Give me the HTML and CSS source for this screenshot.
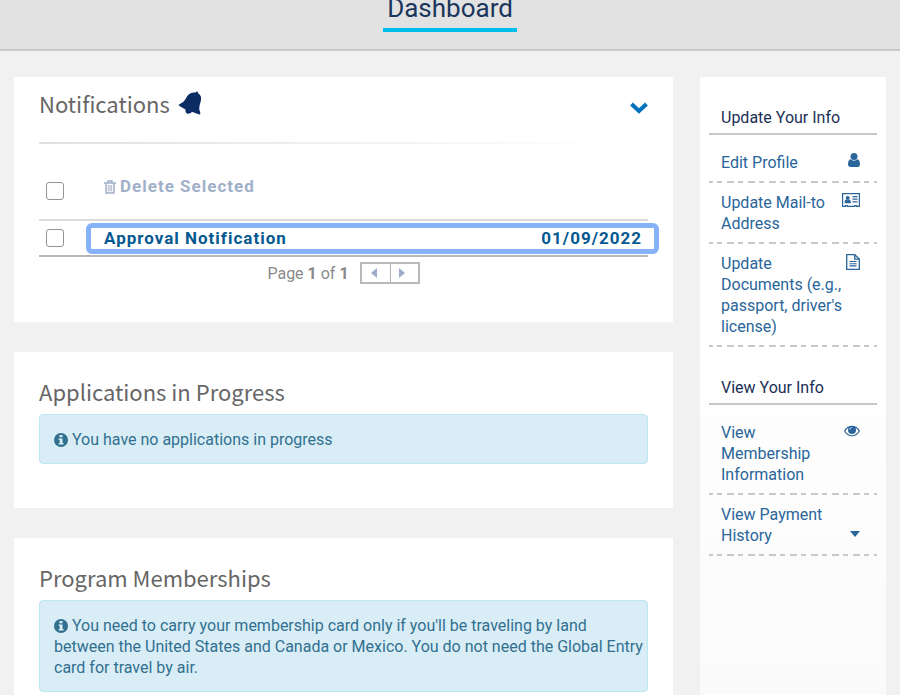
FILE: index.html
```html
<!DOCTYPE html>
<html lang="en">
<head>
    <meta charset="utf-8">
    <title>Dashboard</title>
    <meta name="viewport" content="width=device-width, initial-scale=1.0">
    <link rel="stylesheet" href="styles.css">
</head>
<body>

<header class="page-header">
    <h1>Dashboard</h1>
</header>

<div class="layout">
    <main class="content">
        <section class="card notifications">
            <div class="card-head">
                <h2>Notifications</h2>
                <svg class="icon-bell" width="24" height="24" viewBox="0 0 24 24" aria-hidden="true">
                    <path d="M1 13.500C4 12 6 10.500 7.500 8C9.500 4 12 1.800 15.500 1.600L17.500 1.500L18.500 0.500L20 1L20 2.200C22.500 3.500 23.500 6 23 9C22.500 12 21 15 21.300 18.500L22.400 22L22 23.400L20.500 23.300L14.500 21C13 21.200 12 23 10 22.700C8 22.500 7.200 21 7.500 18.500L1.500 15C0.700 14.500 0.500 13.900 1 13.500Z"/>
                </svg>
                <button type="button" class="toggle" aria-label="Collapse notifications">
                    <svg width="18" height="12" viewBox="0 0 18 12"><path d="M1.500 2L9 9L16.500 2" fill="none" stroke="currentColor" stroke-width="4"/></svg>
                </button>
            </div>
            <hr class="fade">
            <table class="notice-table">
                <tr class="select-row">
                    <td class="check"><input type="checkbox" aria-label="Select all notifications"></td>
                    <td>
                        <button type="button" class="delete-button">
                            <svg width="12" height="14" viewBox="0 0 12 14" stroke="currentColor" aria-hidden="true">
                                <path d="M0 3H12M4 3V1H8V3" fill="none" stroke-width="1.500"/>
                                <path d="M2 3V13H10V3" fill="none" stroke-width="1.500"/>
                                <path d="M4.300 5V11.500M6 5V11.500M7.700 5V11.500" fill="none" stroke-width="0.900"/>
                            </svg>
                            Delete Selected
                        </button>
                    </td>
                </tr>
                <tr class="notice-row">
                    <td class="check"><input type="checkbox" aria-label="Select Approval Notification"></td>
                    <td>
                        <a href="#" class="notice-link"><span>Approval Notification</span><span>01/09/2022</span></a>
                    </td>
                </tr>
            </table>
            <div class="pager">
                <span>Page <b>1</b> of <b>1</b></span>
                <div class="pager-buttons">
                    <button type="button" aria-label="Previous page"><svg width="6" height="10" viewBox="0 0 6 10"><path d="M6 0V10L0 5Z"/></svg></button>
                    <button type="button" aria-label="Next page"><svg width="6" height="10" viewBox="0 0 6 10"><path d="M0 0V10L6 5Z"/></svg></button>
                </div>
            </div>
        </section>

        <section class="card applications">
            <h2>Applications in Progress</h2>
            <p class="alert"><svg class="icon-info" width="14" height="14" viewBox="0 0 14 14" aria-hidden="true"><circle cx="7" cy="7" r="7"/><path d="M5.500 2H8.500V4.300H5.500ZM4.700 5.500H8.500V10H9.500V11.600H4.700V10H5.700V7.100H4.700Z"/></svg> You have no applications in progress</p>
        </section>

        <section class="card">
            <h2>Program Memberships</h2>
            <p class="alert"><svg class="icon-info" width="14" height="14" viewBox="0 0 14 14" aria-hidden="true"><circle cx="7" cy="7" r="7"/><path d="M5.500 2H8.500V4.300H5.500ZM4.700 5.500H8.500V10H9.500V11.600H4.700V10H5.700V7.100H4.700Z"/></svg> You need to carry your membership card only if you'll be traveling by land between the United States and Canada or Mexico. You do not need the Global Entry card for travel by air.</p>
        </section>
    </main>

    <aside class="sidebar">
        <h3>Update Your Info</h3>
        <ul>
            <li><a href="#">
                <span>Edit Profile</span>
                <svg width="12" height="14" viewBox="0 0 12 14" aria-hidden="true"><circle cx="6" cy="3.500" r="3.500"/><path d="M2.600 6.200C0.800 6.600 0 8.500 0 11.200C0 12.800 1 14 2.400 14H9.600C11 14 12 12.800 12 11.200C12 8.500 11.200 6.600 9.400 6.200C7.500 8.100 4.500 8.100 2.600 6.200Z"/></svg>
            </a></li>
            <li><a href="#">
                <span>Update Mail-to Address</span>
                <svg width="18" height="14" viewBox="0 0 18 14" aria-hidden="true">
                    <path d="M1 0.600H17.400V13.400H14.500V12.600H12.500V13.400H5.500V12.600H3.500V13.400H0.600V0.600Z" fill="none" stroke="currentColor" stroke-width="1.200"/>
                    <circle cx="5.700" cy="5" r="2"/>
                    <path d="M3.800 6.600C2.800 7 2.600 8.200 2.600 10.200H8.800C8.800 8.200 8.600 7 7.600 6.600C6.500 7.600 4.900 7.600 3.800 6.600Z"/>
                    <path d="M10.500 3.600H15.500M10.500 6.200H15.500M10.500 8.800H15.500" stroke="currentColor" stroke-width="1.200"/>
                </svg>
            </a></li>
            <li><a href="#">
                <span>Update Documents (e.g., passport, driver's license)</span>
                <svg width="14" height="16" viewBox="0 0 14 16" aria-hidden="true">
                    <path d="M0.700 0.700H8.800L13.300 5V15.300H0.700ZM8.700 0.700V5.200H13.300" fill="none" stroke="currentColor" stroke-width="1.300"/>
                    <path d="M3.500 7.500H10.500M3.500 9.700H10.500M3.500 11.900H10.500" stroke="currentColor" stroke-width="1.100"/>
                </svg>
            </a></li>
        </ul>

        <h3>View Your Info</h3>
        <ul>
            <li><a href="#">
                <span>View Membership Information</span>
                <svg width="16" height="14" viewBox="0 0 16 14" aria-hidden="true">
                    <path d="M0.700 8C4 1.700 12 1.700 15.300 8C12 14.300 4 14.300 0.700 8Z" fill="none" stroke="currentColor" stroke-width="1.200"/>
                    <circle cx="8" cy="7" r="4"/>
                    <path d="M5.800 6.700C5.900 5.400 6.800 4.500 8 4.500" fill="none" stroke="#fff" stroke-width="0.800"/>
                </svg>
            </a></li>
            <li class="expandable"><a href="#">
                <span>View Payment History</span>
                <svg width="10" height="6" viewBox="0 0 10 6" aria-hidden="true"><path d="M0 0H10L5 6Z"/></svg>
            </a></li>
        </ul>
    </aside>
</div>

</body>
</html>
```
FILE: styles.css
```css
* {
    box-sizing: border-box;
}
body {
    margin: 0;
    font-family: Roboto, Arial, sans-serif;
    font-size: 16px;
    line-height: 21px;
    background-color: #f1f1f1;
}
h1, h2, h3, p, ul {
    margin: 0;
    padding: 0;
    font-weight: normal;
}
button {
    padding: 0;
    border: 0;
    background: none;
    font: inherit;
    cursor: pointer;
}
svg {
    fill: currentColor;
    flex-shrink: 0;
}
.page-header {
    display: flex;
    justify-content: center;
    background: #e2e2e2;
    border-bottom: 2px solid #c9c9c9;
}
.page-header h1 {
    margin-bottom: 17px;
    padding: 0 4px 12px;
    font-size: 26px;
    line-height: 16px;
    color: #1b365d;
    border-bottom: 4px solid #00bdeb;
}
.layout {
    display: grid;
    grid-template-columns: minmax(0, 1fr) 186px;
    gap: 27px;
    padding: 26px 14px 0;
}
.content {
    display: flex;
    flex-direction: column;
    gap: 30px;
}
.card {
    padding: 25px;
    background: #fff;
}
h2 {
    padding-bottom: 9px;
    font-family: "Noto Sans CJK JP", sans-serif;
    font-size: 22px;
    line-height: 28px;
    color: #666;
}

/* notifications */
.notifications {
    padding: 12px 25px 38px;
}
.card-head {
    display: flex;
    align-items: center;
    gap: 8px;
}
.card-head h2 {
    padding: 0;
}
.icon-bell {
    color: #0b2d63;
}
.toggle {
    display: flex;
    margin: 10px 0 0 auto;
    color: #0071bc;
    line-height: 0;
}
.fade {
    height: 2px;
    margin: 25px 0 0;
    border: 0;
    background: linear-gradient(to right, #e0e0e0, #fff 94%);
}
.notice-table {
    width: 100%;
    border-collapse: collapse;
}
.notice-table td {
    padding: 0;
}
.notice-table .check {
    width: 52px;
    padding-left: 7px;
}
.notice-table input {
    display: block;
    appearance: none;
    width: 18px;
    height: 18px;
    margin: 0;
    border: 1px solid #949494;
    border-radius: 3px;
    background: #fff;
}
.select-row {
    height: 76px;
    border-bottom: 2px solid #dcdcdc;
}
.select-row .check {
    padding-top: 18px;
}
.select-row td {
    padding-top: 10px;
}
.notice-row {
    height: 36px;
    border-bottom: 2px solid #b8b8b8;
}
.delete-button {
    display: flex;
    align-items: center;
    gap: 4px;
    padding-left: 13px;
    font-size: 17px;
    font-weight: bold;
    letter-spacing: 1px;
    color: #a1b0c9;
}
.notice-link {
    display: flex;
    justify-content: space-between;
    margin-right: -6px;
    padding: 0 12px 0 13px;
    outline: 5px solid #86b2fa;
    border-radius: 1px;
    font-size: 17px;
    font-weight: bold;
    letter-spacing: 1px;
    color: #045990;
    text-decoration: none;
}
.pager {
    display: flex;
    justify-content: center;
    align-items: center;
    gap: 11px;
    margin-top: 5px;
    color: #8a8a8a;
}
.pager-buttons {
    display: flex;
    border: 2px solid #b9b9b9;
}
.pager-buttons button {
    width: 28px;
    height: 18px;
    padding-right: 4px;
    color: #9daecb;
    line-height: 0;
}
.pager-buttons button + button {
    border-left: 1px solid #b0b0b0;
}

.applications {
    padding-bottom: 44px;
}
.alert {
    padding: 14px 0 13px 14px;
    color: #31708f;
    background: #d9edf7;
    border: 1px solid #bce8f1;
    border-radius: 4px;
}
.icon-info {
    vertical-align: -2px;
}
.icon-info path {
    fill: #d9edf7;
}

/* sidebar */
.sidebar {
    padding: 30px 9px 0;
    background: linear-gradient(#fff 40%, #fafafa);
}
.sidebar h3 {
    padding: 0 12px 5px;
    font-size: 16px;
    color: #1b2f55;
    border-bottom: 2px solid #c8c8c8;
}
.sidebar ul {
    margin-bottom: 30px;
    padding-top: 8px;
    list-style: none;
}
.sidebar li {
    padding: 9px 0 10px;
    background: repeating-linear-gradient(to right, #c8c8c8 0 4px, transparent 4px 8px, #c8c8c8 8px 13px, transparent 13px 18px, #c8c8c8 18px 21px) bottom / 100% 2px no-repeat;
}
.sidebar a {
    display: flex;
    justify-content: space-between;
    align-items: flex-start;
    padding: 0 17px 0 12px;
    color: #29659a;
    text-decoration: none;
}
.sidebar a span {
    flex: 0 0 124px;
}
.sidebar a svg {
    margin-top: 1px;
    margin-left: -8px;
}
.sidebar .expandable a {
    align-items: flex-end;
}
.sidebar .expandable svg {
    margin-bottom: 9px;
}
```
